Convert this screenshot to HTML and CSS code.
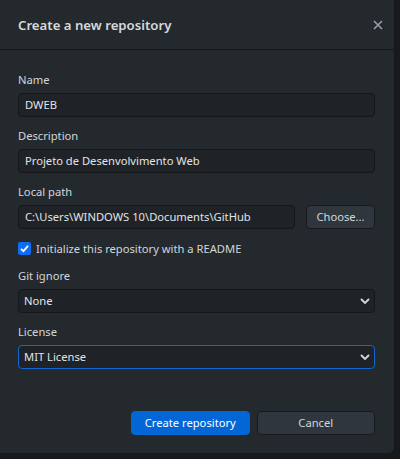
FILE: index.html
```html
<!DOCTYPE html>
<html>
<head>
<meta charset="utf-8">
<link rel="stylesheet" href="styles.css">
</head>
<body>
<div class="page">
  <div class="dialog">
    <div class="header">
      <h1 class="title">Create a new repository</h1>
      <svg class="close" width="10" height="10" viewBox="0 0 10 10"><path d="M1 1L9 9M9 1L1 9" stroke="#9aa0a6" stroke-width="1.5" fill="none"/></svg>
    </div>
    <div class="body">
      <div class="field">
        <div class="label">Name</div>
        <div class="input">DWEB</div>
      </div>
      <div class="field">
        <div class="label">Description</div>
        <div class="input">Projeto de Desenvolvimento Web</div>
      </div>
      <div class="field">
        <div class="label">Local path</div>
        <div class="path-row">
          <div class="input grow">C:\Users\WINDOWS 10\Documents\GitHub</div>
          <div class="btn secondary choose">Choose...</div>
        </div>
      </div>
      <div class="check-row">
        <span class="checkbox"><svg width="13" height="13" viewBox="0 0 13 13"><path d="M3 6.8L5.4 9.2L10 3.8" stroke="#fff" stroke-width="1.8" fill="none"/></svg></span>
        <span class="check-label">Initialize this repository with a README</span>
      </div>
      <div class="field">
        <div class="label">Git ignore</div>
        <div class="input select">None<svg class="chev" width="10" height="6" viewBox="0 0 10 6"><path d="M1 1L5 5L9 1" stroke="#d6d9dc" stroke-width="1.8" fill="none"/></svg></div>
      </div>
      <div class="field">
        <div class="label">License</div>
        <div class="input select focused">MIT License<svg class="chev" width="10" height="6" viewBox="0 0 10 6"><path d="M1 1L5 5L9 1" stroke="#d6d9dc" stroke-width="1.8" fill="none"/></svg></div>
      </div>
    </div>
    <div class="footer">
      <div class="btn primary">Create repository</div>
      <div class="btn secondary cancel">Cancel</div>
    </div>
  </div>
</div>
</body>
</html>
```
FILE: styles.css
```css
* { box-sizing: border-box; }
html, body { margin: 0; padding: 0; }
body {
  background: #17191c;
  width: 400px;
  height: 459px;
  overflow: hidden;
  font-family: "Noto Sans", "Open Sans", sans-serif;
  font-size: 11.2px;
  color: #d3d6d9;
}
.page { width: 400px; height: 459px; }
.dialog {
  width: 394px;
  height: 453px;
  background: #24292e;
  border-radius: 0 0 6px 0;
  display: flex;
  flex-direction: column;
}
.header {
  height: 50px;
  border-bottom: 1px solid #141618;
  display: flex;
  align-items: center;
  justify-content: space-between;
  padding: 0 11px 0 18px;
}
.title {
  margin: 0;
  font-size: 13.2px;
  font-weight: 600;
  color: #d6d9dc;
}
.close { display: block; }
.body {
  padding: 22px 19px 0 18px;
  display: flex;
  flex-direction: column;
}
.field { display: flex; flex-direction: column; margin-bottom: 11px; }
.label { height: 16px; line-height: 16px; margin-bottom: 5px; color: #d3d6d9; }
.input {
  height: 24px;
  line-height: 22px;
  background: #1f2226;
  border: 1px solid #151719;
  border-radius: 4px;
  padding: 0 6px;
  color: #e1e4e8;
  white-space: nowrap;
  overflow: hidden;
}
.path-row { display: flex; gap: 11px; }
.grow { flex: 1; }
.btn {
  height: 24px;
  line-height: 22px;
  border-radius: 4px;
  text-align: center;
  color: #d3d6d9;
}
.secondary { background: #2f363d; border: 1px solid #17191c; }
.choose { width: 69px; }
.check-row {
  height: 16px;
  display: flex;
  align-items: center;
  gap: 5px;
  margin-bottom: 12px;
  margin-top: 0;
}
.checkbox {
  width: 13px;
  height: 13px;
  background: #0f6cf5;
  border-radius: 2px;
  display: block;
}
.checkbox svg { display: block; }
.check-label { color: #d3d6d9; }
.select {
  display: flex;
  align-items: center;
  justify-content: space-between;
  padding: 0 4px 0 5px;
}
.chev { display: block; }
.focused { border-color: #0f67d2; }
.footer {
  margin-top: auto;
  padding: 0 19px 18px 131px;
  display: flex;
  gap: 7px;
}
.footer .btn { flex: 1; }
.primary { background: #0366d6; color: #fff; border: 1px solid #0366d6; }
```
